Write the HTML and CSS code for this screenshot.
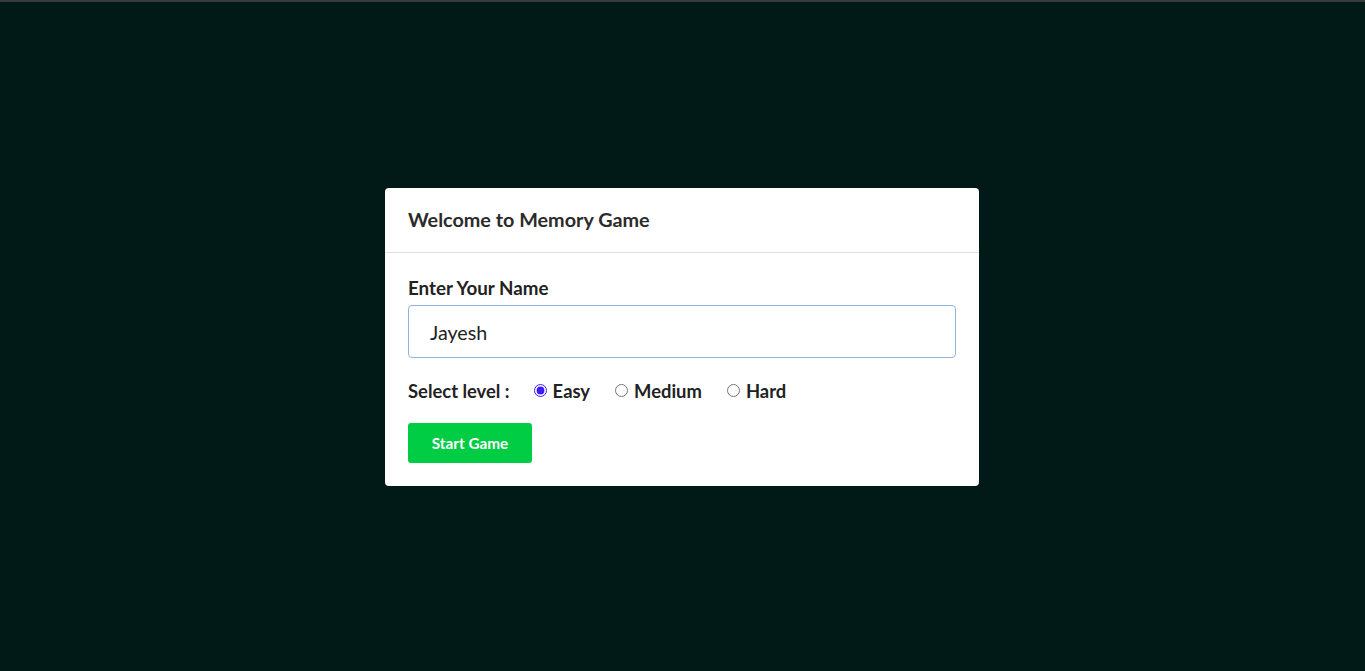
FILE: index.html
```html
<!DOCTYPE html>
<html lang="en">
<head>
<meta charset="utf-8">
<title>Memory Game</title>
<link rel="stylesheet" href="styles.css">
</head>
<body>
<div class="topbar"></div>
<main class="stage">
  <section class="card">
    <header class="card-header">
      <h1 class="card-title">Welcome to Memory Game</h1>
    </header>
    <div class="card-body">
      <label class="field-label" for="name">Enter Your Name</label>
      <input class="name-input" id="name" type="text" value="Jayesh">
      <div class="level-row">
        <span class="level-label">Select level :</span>
        <label class="level-option"><input type="radio" name="level" checked> Easy</label>
        <label class="level-option"><input type="radio" name="level"> Medium</label>
        <label class="level-option"><input type="radio" name="level"> Hard</label>
      </div>
      <button class="start-btn" type="button">Start Game</button>
    </div>
  </section>
</main>
</body>
</html>
```
FILE: styles.css
```css
* { box-sizing: border-box; }
html, body { height: 100%; }
body {
  margin: 0;
  background: #011a17;
  font-family: Lato, "Noto Sans", sans-serif;
  display: flex;
  flex-direction: column;
}
.topbar {
  height: 2px;
  background: #3a3a3a;
  flex: none;
}
.stage {
  flex: 1;
  display: flex;
  align-items: center;
  justify-content: center;
  padding-right: 1px;
}
.card {
  width: 594px;
  background: #fff;
  border-radius: 4px;
}
.card-header {
  height: 65px;
  padding: 0 23px 2px;
  display: flex;
  align-items: center;
  border-bottom: 1px solid #dee2e6;
}
.card-title {
  margin: 0;
  font-size: 19.8px;
  font-weight: 700;
  color: #2b2b2b;
}
.card-body {
  padding: 24px 23px 23px;
  display: flex;
  flex-direction: column;
  align-items: flex-start;
}
.field-label {
  font-size: 18.8px;
  font-weight: 700;
  color: #222;
  line-height: 22px;
  margin-bottom: 6px;
}
.name-input {
  width: 100%;
  height: 53px;
  border: 1px solid #8fb3dd;
  border-radius: 4px;
  padding: 3px 21px 0;
  font-family: inherit;
  font-size: 19.7px;
  color: #222;
  outline: none;
}
.level-row {
  display: flex;
  align-items: center;
  margin-top: 21px;
  height: 24px;
  font-size: 18.4px;
  font-weight: 700;
  color: #222;
}
.level-label { margin-right: 23px; }
.level-option {
  display: flex;
  align-items: center;
  margin-right: 24px;
}
.level-option input {
  margin: 0 6px 0 1px;
  width: 13px;
  height: 13px;
  accent-color: #3c1cff;
}
.start-btn {
  margin-top: 20px;
  width: 124px;
  height: 40px;
  border: none;
  border-radius: 3px;
  background: #00cc44;
  color: #fff;
  font-family: inherit;
  font-size: 15.3px;
  font-weight: 700;
}
```
